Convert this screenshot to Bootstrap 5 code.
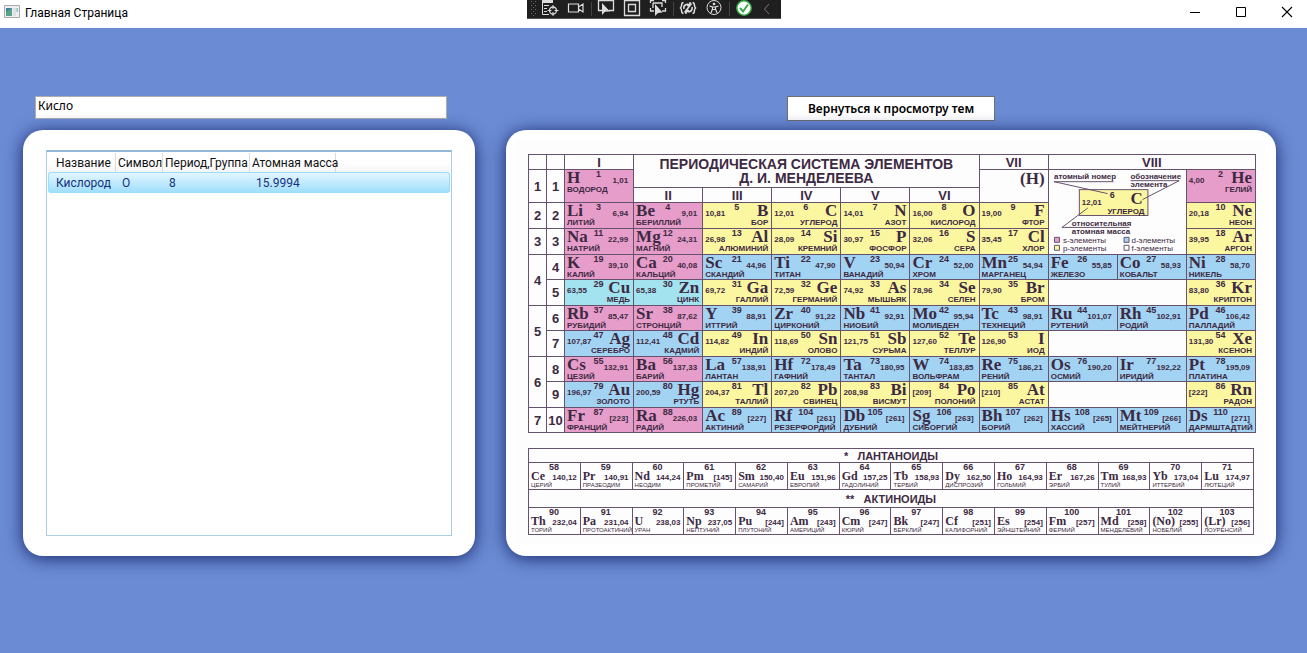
<!DOCTYPE html>
<html lang="ru">
<head>
<meta charset="utf-8">
<meta name="viewport" content="width=device-width, initial-scale=1">
<title>Главная Страница</title>
<link href="https://cdn.jsdelivr.net/npm/bootstrap@5.3.0/dist/css/bootstrap.min.css" rel="stylesheet">
<style>
  :root { --ink: #3d2a42; --rule: #66526c; --s: #e79dca; --p: #fbf7a1; --d: #a2d3f3; --dc: #a3e2ef; }
  body { background: #6b8cd5; font-family: Roboto, "Noto Sans", sans-serif; font-size: 12px; line-height: 16px; color: #111; }
  .titlebar { height: 28px; background: #fff; padding-left: 4px; }
  .titlebar h1 { font-size: 12px; line-height: 16px; font-weight: 400; color: #000; padding-left: 5px; padding-top: 1px; }
  .winbtn { width: 46px; height: 24px; border: 0; padding: 0 0 0 6px; background: none; line-height: 0; }
  .debugbar { height: 19px; background: #1f1f1f; border-bottom: 1px solid #555; width: 254px; padding-left: 3px; }
  .debugbar button { width: 26px; height: 18px; border: 0; padding: 0; background: none; line-height: 0; }
  .debugbar button.slim { width: 20px; }
  .debugbar i { width: 1px; height: 14px; margin: 0 1px 0 2px; background: #444; }
  .page-grid { display: grid; grid-template-columns: 452fr 770fr; column-gap: 31px; padding: 68px 31px 99px 23px; }
  .tools { height: 34px; }
  .search { width: 100%; height: 23px; margin: 0 28px 0 12px; border: 1px solid #abadb3; padding: 0 2px 4px; color: #000; background: #fff; border-radius: 0; outline: 0; font-family: "Noto Sans", sans-serif; }
  .back { width: 208px; height: 25px; border: 1px solid #707070; background: #fff; font-family: "Noto Sans", sans-serif; font-weight: 600; color: #000; padding: 0; font-size: 12px; }
  .panel { background: #fff; border-radius: 20px; box-shadow: 0 2px 18px rgba(8, 20, 85, .85); }
  .panel-list { padding: 20px 23px; }
  .listbox { border: 1px solid #a9cfe6; border-top: 2px solid #93b8d6; padding: 1px; min-height: 300px; }
  .listbox table { width: 100%; table-layout: fixed; border-collapse: separate; border-spacing: 0; }
  .listbox th { height: 19px; font-weight: 400; padding: 0 0 0 2px; white-space: nowrap; border-right: 1px solid #dcdcdc; background: linear-gradient(#fff 50%, #f5f5f5); }
  .listbox th:first-child { padding-left: 8px; }
  .listbox th:last-child { border-right: 0; }
  .listbox td { height: 21px; padding: 0 0 0 6px; color: #15317e; border: 1px solid #99defd; border-width: 1px 0; background: linear-gradient(#e3f6ff, #a0dffb); }
  .listbox td:first-child { padding-left: 7px; border-left-width: 1px; border-radius: 3px 0 0 3px; }
  .listbox td:last-child { border-right-width: 1px; border-radius: 0 3px 3px 0; }
  .c-name { width: 68px; } .c-sym { width: 47px; } .c-per { width: 87px; } .c-mass { width: 86px; }
  .panel-chart { padding: 11px 10px 12px; }
  .chart { background: #fefdfe; padding: 13px 10px 9px 12px; color: var(--ink); font-family: "Liberation Sans", Arial, sans-serif; font-weight: 700; font-size: 8px; line-height: 9px; }
  .chart table { width: 100%; table-layout: fixed; border-collapse: collapse; }
  .chart td, .chart th { border: 1px solid var(--rule); padding: 0 3px 0 2px; vertical-align: top; white-space: nowrap; }
  .chart th { padding: 0; text-align: center; vertical-align: middle; font-size: 13px; line-height: 13px; }
  .chart th.heading { font-size: 14px; line-height: 14px; }
  .c-period { width: 18px; }
  .h14 { height: 14px; } .h15 { height: 15px; } .h18 { height: 18px; }
  .h25 { height: 25px; } .h26 { height: 26px; } .h27 { height: 27px; }
  .k-s { background: var(--s); } .k-p { background: var(--p); } .k-d { background: var(--d); } .k-c { background: var(--dc); }
  .el { display: grid; grid-template-columns: minmax(0, 1fr) auto minmax(0, 1fr); align-items: baseline; line-height: 15px; height: 15px; }
  .el .sy, .fl .sy, .hyd { font-family: "Liberation Serif", "Times New Roman", serif; font-size: 17px; }
  .el .no { font-size: 9px; line-height: 9px; align-self: start; }
  .el > :last-child { justify-self: end; }
  .el:not(.flip) .ms { padding-right: 2px; }
  .el.flip .ms { order: -1; justify-self: start; }
  .el.flip .no { order: 0; }
  .el.flip .sy { order: 1; justify-self: end; }
  .chart td.hyd { text-align: right; line-height: 18px; }
  .f-no { font-size: 9px; line-height: 9px; text-align: center; }
  .fl { height: 9px; }
  .fl .sy { font-size: 12px; }
  .f-nm { font-size: 6px; line-height: 8px; font-weight: 400; }
  .f-wrap { padding: 15px 2px 0 0; }
  .f-wrap th { font-size: 11px; line-height: 12px; }
  .chart td.legend { padding: 0; }
  .legend svg { display: block; width: 100%; height: 84px; }
</style>
</head>
<body>
<header class="titlebar position-relative d-flex align-items-start">
  <svg class="mt-1 flex-shrink-0" width="16" height="16" viewBox="0 0 16 16"><path d="M.5 1.500h15v12H.500z" fill="#eef0f2" stroke="#a7abb0"/><path d="M2 4h6v8H2z" fill="#3f7f9f"/><path d="M2 8l6-4v8H2z" fill="#5ba386"/><path d="M9 4h3v8H9z" fill="#dde1e6"/><path d="M12.500 4H14v4h-1.500z" fill="#8fc0b8"/></svg>
  <h1 class="mb-0 mt-1">Главная Страница</h1>
  <div class="ms-auto d-flex">
    <button class="winbtn" aria-label="Свернуть"><svg width="12" height="12"><path d="M1 6.500h10" stroke="#000"/></svg></button>
    <button class="winbtn" aria-label="Развернуть"><svg width="12" height="12"><path d="M1.500 1.500h9v9h-9z" fill="none" stroke="#000"/></svg></button>
    <button class="winbtn" aria-label="Закрыть"><svg width="12" height="12"><path d="M1 1l10 10M11 1L1 11" stroke="#000" stroke-width="1.100"/></svg></button>
  </div>
  <div class="position-absolute top-0 start-0 end-0 d-flex justify-content-center pe-none">
    <div class="debugbar d-flex align-items-center">
      <svg width="7" height="18" class="flex-shrink-0" fill="#686868"><path d="M1 1h1v1H1zM5 1h1v1H5zM3 3h1v1H3zM1 5h1v1H1zM5 5h1v1H5zM3 7h1v1H3zM1 9h1v1H1zM5 9h1v1H5zM3 11h1v1H3zM1 13h1v1H1zM5 13h1v1H5zM3 15h1v1H3z"/></svg>
      <button aria-label="Живое визуальное дерево"><svg width="18" height="18" fill="none" stroke="#ddd"><path d="M1 0h11v3H1z" fill="#ddd" stroke="none"/><path d="M1.500 2v12.500H8M3 5.500h5M3 8.500h3M3 11.500h3"/><circle cx="12" cy="10.500" r="3.500" stroke-width="1.300"/><path d="M12 5v4M12 12v4M6.500 10.500h4M13.500 10.500h4"/></svg></button>
      <button aria-label="Запись"><svg width="18" height="18" fill="none" stroke="#ddd" stroke-width="1.200"><path d="M1.500 4h10v8h-10zM11.500 7l4.500-3v8l-4.500-3"/></svg></button>
      <i></i>
      <button aria-label="Выбрать элемент"><svg width="18" height="18" fill="none" stroke="#ddd"><path d="M5 10.500H1.500V0M16.500 0v10.500H12M1.500 .5h15" stroke-width="1.300"/><path d="M5 3v12l3-3.200 5-.3z" fill="#ddd" stroke="none"/></svg></button>
      <button aria-label="Границы макета"><svg width="18" height="18" fill="none" stroke="#ddd" stroke-width="1.300"><path d="M1.500 .5h15v15h-15zM5.500 4.500h7v7h-7z"/></svg></button>
      <button aria-label="Отслеживать фокус"><svg width="18" height="18" fill="none" stroke="#ddd" stroke-width="1.300"><path d="M1.500 3V.5H5M13 .5h3.500V3M1.500 8v3H5M13 11h3.500V8M4 3h9v4M4 3v5"/><path d="M6 4v12l3-3 4.500-.5z" fill="#ddd" stroke="none"/></svg></button>
      <i></i>
      <button aria-label="Горячая перезагрузка"><svg width="18" height="18" fill="none" stroke="#ddd" stroke-width="1.500"><path d="M4.500 2.500c-3 0-1 4-3 5.500 2 1.500 0 5.500 3 5.500M13.500 2.500c3 0 1 4 3 5.500-2 1.500 0 5.500-3 5.500M5 9c-1-4 3-6 6-4M13 7c1 4-3 6-6 4M5.500 12.500l7-9M11 2v3.500H8M7 14v-3.500h3"/></svg></button>
      <button aria-label="Специальные возможности"><svg width="18" height="18" fill="none" stroke="#ddd"><circle cx="9" cy="7.500" r="7"/><circle cx="9" cy="4" r="1.300" fill="#ddd" stroke="none"/><path d="M4.500 6l3 1v2l-1.500 4M13.500 6l-3 1v2l1.500 4M7.500 7h3M7.500 9.500h3" stroke-width="1.200"/></svg></button>
      <i></i>
      <button aria-label="Привязки без ошибок"><svg width="18" height="18"><circle cx="9" cy="8" r="7.200" fill="#fff" stroke="#35a845" stroke-width="1.500"/><path d="M5 8l3 3.500L13 4.500" fill="none" stroke="#35a845" stroke-width="2"/></svg></button>
      <button class="slim" aria-label="Свернуть панель"><svg width="8" height="14" fill="none" stroke="#777"><path d="M6 2L1.500 7 6 12"/></svg></button>
    </div>
  </div>
</header>

<main class="page-grid">
  <div class="tools d-flex align-items-start"><input class="search" type="text" value="Кисло" aria-label="Поиск элемента"></div>
  <div class="tools d-flex align-items-start justify-content-center"><button class="back">Вернуться к просмотру тем</button></div>

  <section class="panel panel-list d-flex flex-column">
    <div class="listbox flex-grow-1">
      <table>
        <colgroup><col class="c-name"><col class="c-sym"><col class="c-per"><col class="c-mass"><col></colgroup>
        <thead><tr><th>Название</th><th>Символ</th><th>Период,Группа</th><th>Атомная масса</th><th></th></tr></thead>
        <tbody><tr><td>Кислород</td><td>О</td><td>8</td><td>15.9994</td><td></td></tr></tbody>
      </table>
    </div>
  </section>

  <section class="panel panel-chart">
    <div class="chart">
      <table>
        <colgroup><col class="c-period"><col class="c-period"><col span="10"></colgroup>
        <tbody id="periods">
          <tr class="h15"><th></th><th></th><th>I</th><th class="heading" colspan="5" rowspan="2">ПЕРИОДИЧЕСКАЯ СИСТЕМА ЭЛЕМЕНТОВ<br>Д. И. МЕНДЕЛЕЕВА</th><th>VII</th><th colspan="3">VIII</th></tr>
          <tr class="h18" id="first">
            <th rowspan="2">1</th><th rowspan="2">1</th>
            <td class="hyd" rowspan="2">(H)</td>
            <td class="legend" colspan="2" rowspan="4">
              <svg viewBox="0 0 138 84" fill="#3d2a42" font-size="8">
                <text x="5" y="9">атомный номер</text><text x="82" y="9">обозначение</text><text x="82" y="17">элемента</text>
                <rect x="30.500" y="19.500" width="69" height="26" fill="#fbf7a1" stroke="#66526c"/>
                <text x="33" y="35">12,01</text><text x="61" y="28" font-size="9">6</text>
                <text x="82" y="34" font-size="17" font-family="Liberation Serif, serif">C</text><text x="96" y="44" text-anchor="end">УГЛЕРОД</text>
                <text x="23" y="56">относительная</text><text x="23" y="64">атомная масса</text>
                <path d="M5 11.500h60M5 11.500l54 12M82 10.500h49l-37 19M39 38L13 57.500h68" fill="none" stroke="#66526c"/>
                <g stroke="#66526c"><path d="M5.500 67.500h5v5h-5z" fill="#e79dca"/><path d="M5.500 75.500h5v5h-5z" fill="#fbf7a1"/><path d="M75.500 67.500h5v5h-5z" fill="#a2d3f3"/><path d="M75.500 75.500h5v5h-5z" fill="#fff"/></g>
                <g font-weight="400"><text x="14" y="73">s-элементы</text><text x="14" y="81">p-элементы</text><text x="83" y="73">d-элементы</text><text x="83" y="81">f-элементы</text></g>
              </svg>
            </td>
          </tr>
          <tr class="h15"><th>II</th><th>III</th><th>IV</th><th>V</th><th>VI</th></tr>
        </tbody>
      </table>
      <div class="f-wrap">
        <table><tbody id="series"></tbody></table>
      </div>
    </div>
  </section>
</main>

<script src="https://cdn.jsdelivr.net/npm/bootstrap@5.3.0/dist/js/bootstrap.bundle.min.js"></script>
<script>
// Element record: kind, symbol, number, mass, name. Upper-case kind puts the symbol on the right.
function cell(rec, span) {
  const [k, sy, no, ms, nm] = rec.trim().split(' ');
  const flip = k !== k.toLowerCase();
  return `<td class="k-${k.toLowerCase()}"${span ? ' rowspan="2"' : ''}><div class="el${flip ? ' flip' : ''}"><span class="sy">${sy}</span><span class="no">${no}</span><span class="ms">${ms}</span></div><div${flip ? ' class="text-end"' : ''}>${nm}</div></td>`;
}
const rows = [
  ['h26', '2', 1, '2', 's Li 3 6,94 ЛИТИЙ|s Be 4 9,01 БЕРИЛЛИЙ|P B 5 10,81 БОР|P C 6 12,01 УГЛЕРОД|P N 7 14,01 АЗОТ|P O 8 16,00 КИСЛОРОД|P F 9 19,00 ФТОР|P Ne 10 20,18 НЕОН'],
  ['h26', '3', 1, '3', 's Na 11 22,99 НАТРИЙ|s Mg 12 24,31 МАГНИЙ|P Al 13 26,98 АЛЮМИНИЙ|P Si 14 28,09 КРЕМНИЙ|P P 15 30,97 ФОСФОР|P S 16 32,06 СЕРА|P Cl 17 35,45 ХЛОР|P Ar 18 39,95 АРГОН'],
  ['h25', '4', 2, '4', 's K 19 39,10 КАЛИЙ|s Ca 20 40,08 КАЛЬЦИЙ|d Sc 21 44,96 СКАНДИЙ|d Ti 22 47,90 ТИТАН|d V 23 50,94 ВАНАДИЙ|d Cr 24 52,00 ХРОМ|d Mn 25 54,94 МАРГАНЕЦ|d Fe 26 55,85 ЖЕЛЕЗО|d Co 27 58,93 КОБАЛЬТ|d Ni 28 58,70 НИКЕЛЬ'],
  ['h26', '', 0, '5', 'C Cu 29 63,55 МЕДЬ|C Zn 30 65,38 ЦИНК|P Ga 31 69,72 ГАЛЛИЙ|P Ge 32 72,59 ГЕРМАНИЙ|P As 33 74,92 МЫШЬЯК|P Se 34 78,96 СЕЛЕН|P Br 35 79,90 БРОМ|-|P Kr 36 83,80 КРИПТОН'],
  ['h25', '5', 2, '6', 's Rb 37 85,47 РУБИДИЙ|s Sr 38 87,62 СТРОНЦИЙ|d Y 39 88,91 ИТТРИЙ|d Zr 40 91,22 ЦИРКОНИЙ|d Nb 41 92,91 НИОБИЙ|d Mo 42 95,94 МОЛИБДЕН|d Tc 43 98,91 ТЕХНЕЦИЙ|d Ru 44 101,07 РУТЕНИЙ|d Rh 45 102,91 РОДИЙ|d Pd 46 106,42 ПАЛЛАДИЙ'],
  ['h26', '', 0, '7', 'D Ag 47 107,87 СЕРЕБРО|D Cd 48 112,41 КАДМИЙ|P In 49 114,82 ИНДИЙ|P Sn 50 118,69 ОЛОВО|P Sb 51 121,75 СУРЬМА|P Te 52 127,60 ТЕЛЛУР|P I 53 126,90 ИОД|-|P Xe 54 131,30 КСЕНОН'],
  ['h25', '6', 2, '8', 's Cs 55 132,91 ЦЕЗИЙ|s Ba 56 137,33 БАРИЙ|d La 57 138,91 ЛАНТАН|d Hf 72 178,49 ГАФНИЙ|d Ta 73 180,95 ТАНТАЛ|d W 74 183,85 ВОЛЬФРАМ|d Re 75 186,21 РЕНИЙ|d Os 76 190,20 ОСМИЙ|d Ir 77 192,22 ИРИДИЙ|d Pt 78 195,09 ПЛАТИНА'],
  ['h26', '', 0, '9', 'D Au 79 196,97 ЗОЛОТО|D Hg 80 200,59 РТУТЬ|P Tl 81 204,37 ТАЛЛИЙ|P Pb 82 207,20 СВИНЕЦ|P Bi 83 208,98 ВИСМУТ|P Po 84 [209] ПОЛОНИЙ|P At 85 [210] АСТАТ|-|P Rn 86 [222] РАДОН'],
  ['h25', '7', 1, '10', 's Fr 87 [223] ФРАНЦИЙ|s Ra 88 226,03 РАДИЙ|d Ac 89 [227] АКТИНИЙ|d Rf 104 [261] РЕЗЕРФОРДИЙ|d Db 105 [261] ДУБНИЙ|d Sg 106 [263] СИБОРГИЙ|d Bh 107 [262] БОРИЙ|d Hs 108 [265] ХАССИЙ|d Mt 109 [266] МЕЙТНЕРИЙ|d Ds 110 [271] ДАРМШТАДТИЙ']
];
const first = document.getElementById('first');
first.children[1].insertAdjacentHTML('afterend', cell('s H 1 1,01 ВОДОРОД', true));
first.insertAdjacentHTML('beforeend', cell('S He 2 4,00 ГЕЛИЙ', true));
document.getElementById('periods').insertAdjacentHTML('beforeend', rows.map(([h, period, span, row, els]) =>
  `<tr class="${h}">${period ? `<th rowspan="${span}">${period}</th>` : ''}<th>${row}</th>` +
  els.split('|').map(e => e === '-' ? '<td colspan="2"></td>' : cell(e)).join('') + '</tr>').join(''));

const series = [
  ['h14', '* &nbsp; ЛАНТАНОИДЫ', 'Ce 58 140,12 ЦЕРИЙ|Pr 59 140,91 ПРАЗЕОДИМ|Nd 60 144,24 НЕОДИМ|Pm 61 [145] ПРОМЕТИЙ|Sm 62 150,40 САМАРИЙ|Eu 63 151,96 ЕВРОПИЙ|Gd 64 157,25 ГАДОЛИНИЙ|Tb 65 158,93 ТЕРБИЙ|Dy 66 162,50 ДИСПРОЗИЙ|Ho 67 164,93 ГОЛЬМИЙ|Er 68 167,26 ЭРБИЙ|Tm 69 168,93 ТУЛИЙ|Yb 70 173,04 ИТТЕРБИЙ|Lu 71 174,97 ЛЮТЕЦИЙ'],
  ['h18', '** &nbsp; АКТИНОИДЫ', 'Th 90 232,04 ТОРИЙ|Pa 91 231,04 ПРОТОАКТИНИЙ|U 92 238,03 УРАН|Np 93 237,05 НЕПТУНИЙ|Pu 94 [244] ПЛУТОНИЙ|Am 95 [243] АМЕРИЦИЙ|Cm 96 [247] КЮРИЙ|Bk 97 [247] БЕРКЛИЙ|Cf 98 [251] КАЛИФОРНИЙ|Es 99 [254] ЭЙНШТЕЙНИЙ|Fm 100 [257] ФЕРМИЙ|Md 101 [258] МЕНДЕЛЕВИЙ|(No) 102 [255] НОБЕЛИЙ|(Lr) 103 [256] ЛОУРЕНСИЙ']
];
document.getElementById('series').innerHTML = series.map(([h, title, els]) =>
  `<tr class="${h}"><th colspan="14">${title}</th></tr><tr class="h27">` + els.split('|').map(e => {
    const [sy, no, ms, nm] = e.split(' ');
    return `<td><div class="f-no">${no}</div><div class="fl d-flex justify-content-between align-items-baseline"><span class="sy">${sy}</span><span>${ms}</span></div><div class="f-nm">${nm}</div></td>`;
  }).join('') + '</tr>').join('');
</script>
</body>
</html>
